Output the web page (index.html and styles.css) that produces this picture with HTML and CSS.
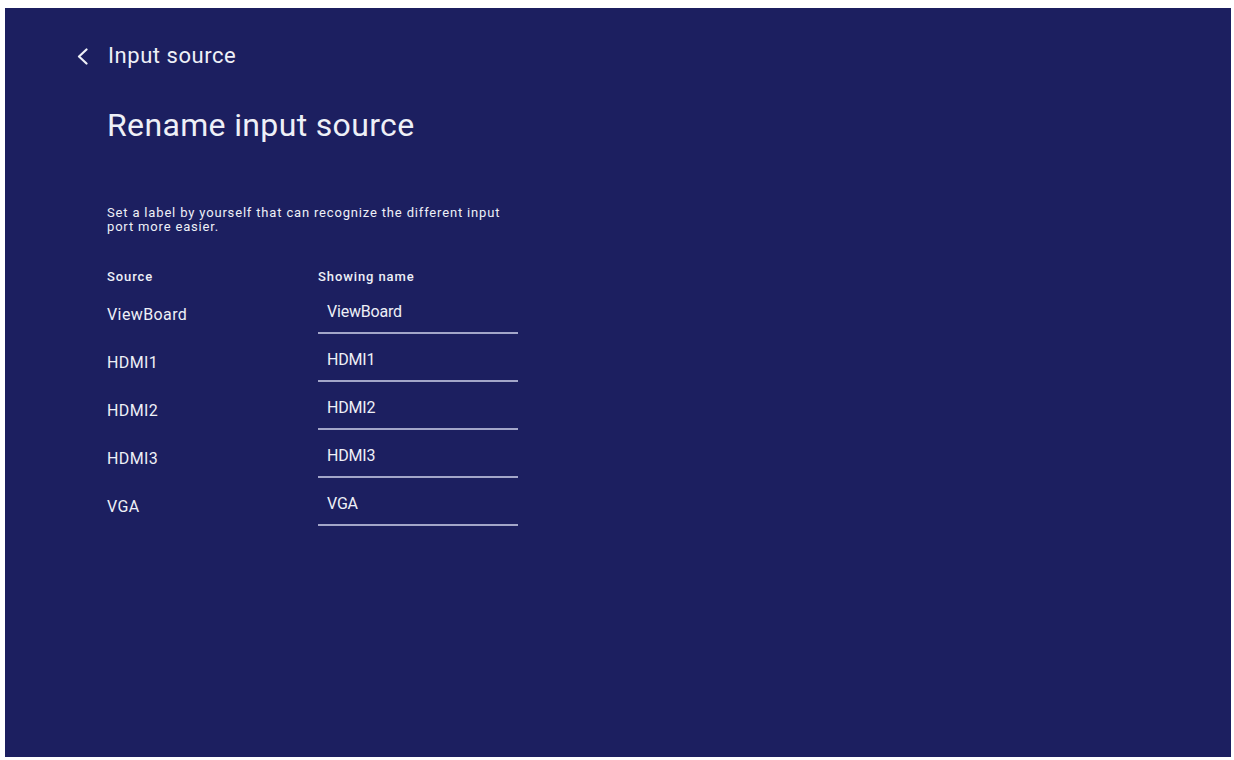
FILE: index.html
```html
<!DOCTYPE html>
<html lang="en">
<head>
<meta charset="utf-8">
<title>Rename input source</title>
<link rel="stylesheet" href="styles.css">
</head>
<body>
<main class="panel">
  <header class="back-row">
    <svg class="back-icon" width="13" height="17" viewBox="0 0 13 17" aria-hidden="true">
      <polyline points="10.5,1.5 3,8.5 10.5,15.5" fill="none" stroke="#eef0f7" stroke-width="2.2" stroke-linecap="round" stroke-linejoin="round"/>
    </svg>
    <span class="back-label">Input source</span>
  </header>
  <section class="content">
    <h1 class="title">Rename input source</h1>
    <p class="desc">Set a label by yourself that can recognize the different input port more easier.</p>
    <div class="table">
      <div class="row head">
        <span class="src">Source</span>
        <span class="name-head">Showing name</span>
      </div>
      <div class="row">
        <span class="src label">ViewBoard</span>
        <span class="field">ViewBoard</span>
      </div>
      <div class="row">
        <span class="src label">HDMI1</span>
        <span class="field">HDMI1</span>
      </div>
      <div class="row">
        <span class="src label">HDMI2</span>
        <span class="field">HDMI2</span>
      </div>
      <div class="row">
        <span class="src label">HDMI3</span>
        <span class="field">HDMI3</span>
      </div>
      <div class="row">
        <span class="src label">VGA</span>
        <span class="field">VGA</span>
      </div>
    </div>
  </section>
</main>
</body>
</html>
```

FILE: styles.css
```css
html, body {
  margin: 0;
  padding: 0;
  background: #ffffff;
}

body {
  padding: 8px 3px 3px 5px;
  font-family: Roboto, "Noto Sans", "Liberation Sans", sans-serif;
  color: #eef0f7;
}

.panel {
  box-sizing: border-box;
  width: 1226px;
  height: 749px;
  background: #1c1f60;
  padding-top: 34px;
}

.back-row {
  display: flex;
  align-items: center;
  height: 28px;
  margin-left: 71px;
  gap: 19px;
}

.back-icon {
  display: block;
  flex: none;
}

.back-label {
  font-size: 22px;
  line-height: 28px;
  letter-spacing: 0.55px;
}

.content {
  padding-left: 102px;
}

.title {
  margin: 35px 0 0;
  font-size: 32px;
  line-height: 40px;
  font-weight: 400;
  letter-spacing: 0.35px;
}

.desc {
  margin: 61px 0 0;
  width: 404px;
  font-size: 13px;
  line-height: 14px;
  font-weight: 400;
  letter-spacing: 0.83px;
}

.table {
  margin-top: 35px;
  display: flex;
  flex-direction: column;
}

.row {
  display: flex;
  align-items: flex-start;
}

.row.head {
  height: 17px;
  font-size: 13px;
  line-height: 16px;
  font-weight: 500;
  letter-spacing: 0.9px;
}

.src {
  width: 211px;
  flex: none;
}

.label {
  padding-top: 19px;
  font-size: 16px;
  line-height: 20px;
  letter-spacing: 0.4px;
}

.field {
  box-sizing: border-box;
  width: 200px;
  height: 48px;
  padding: 16px 0 0 9px;
  font-size: 16px;
  line-height: 20px;
  letter-spacing: -0.2px;
  border-bottom: 2px solid #a3a6c9;
}
```
